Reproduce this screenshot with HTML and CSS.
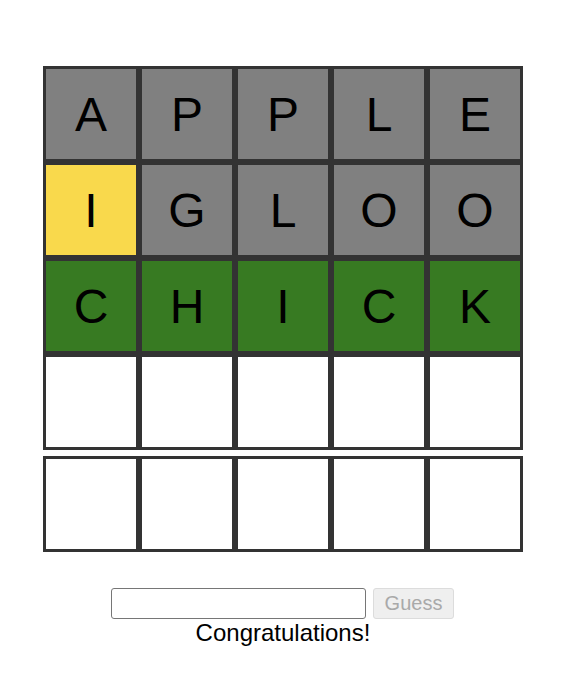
FILE: index.html
```html
<!DOCTYPE html>
<html>
<head>
<meta charset="utf-8">
<link rel="stylesheet" href="styles.css">
</head>
<body>
<div class="app">
  <div class="board">
    <div class="row">
      <div class="cell gray">A</div><div class="cell gray">P</div><div class="cell gray">P</div><div class="cell gray">L</div><div class="cell gray">E</div>
    </div>
    <div class="row">
      <div class="cell yellow">I</div><div class="cell gray">G</div><div class="cell gray">L</div><div class="cell gray">O</div><div class="cell gray">O</div>
    </div>
    <div class="row">
      <div class="cell green">C</div><div class="cell green">H</div><div class="cell green">I</div><div class="cell green">C</div><div class="cell green">K</div>
    </div>
    <div class="row">
      <div class="cell"></div><div class="cell"></div><div class="cell"></div><div class="cell"></div><div class="cell"></div>
    </div>
    <div class="row row-sep">
      <div class="cell"></div><div class="cell"></div><div class="cell"></div><div class="cell"></div><div class="cell"></div>
    </div>
  </div>
  <div class="controls">
    <input class="guess-input" type="text">
    <button class="guess-btn" disabled>Guess</button>
  </div>
  <div class="message">Congratulations!</div>
</div>
</body>
</html>
```
FILE: styles.css
```css
body {
  margin: 8px;
  background: #ffffff;
  font-family: "Liberation Sans", Arial, sans-serif;
}
.app {
  width: 550px;
  padding-top: 58px;
}
.board {
  width: 480px;
  margin: 0 auto;
}
.row {
  display: flex;
}
.row-sep {
  margin-top: 6px;
}
.cell {
  box-sizing: border-box;
  width: 96px;
  height: 96px;
  border: 3px solid #333333;
  background: #ffffff;
  display: flex;
  align-items: center;
  justify-content: center;
  font-size: 48px;
  color: #000000;
}
.gray { background: #808080; }
.yellow { background: #f9d94c; }
.green { background: #377a22; }
.controls {
  margin-top: 36px;
  padding-right: 1px;
  display: flex;
  justify-content: center;
  gap: 7px;
}
.guess-input {
  box-sizing: border-box;
  width: 255px;
  height: 31px;
  margin: 0;
  border: 1px solid #767676;
  border-radius: 3px;
  padding: 1px 2px;
  font-family: "Liberation Sans", Arial, sans-serif;
  font-size: 20px;
}
.guess-btn {
  box-sizing: border-box;
  width: 81px;
  height: 31px;
  margin: 0;
  padding: 0;
  border: 1px solid #dcdcdc;
  border-radius: 3px;
  background: #efefef;
  color: #a9a9a9;
  font-family: "Liberation Sans", Arial, sans-serif;
  font-size: 20px;
}
.message {
  text-align: center;
  font-size: 24px;
  color: #000000;
}
```
